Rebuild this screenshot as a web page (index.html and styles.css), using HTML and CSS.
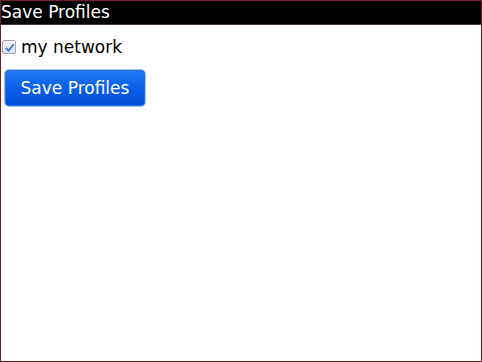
FILE: index.html
```html
<!DOCTYPE html>
<html lang="en">
  <head>
    <meta charset="UTF-8" />
    <title>Save Profiles</title>
    <link rel="stylesheet" href="styles.css">
  </head>
  <body>
    <div class="screen">
      <div class="title-bar">Save Profiles</div>
      <div class="content">
        <label class="check-row">
          <span class="check-box">
            <svg width="11" height="11" viewBox="0 0 12 12">
              <path d="M2 6.5 L5 9.5 L10.5 2.5" fill="none" stroke="#2f6fd0" stroke-width="1.8" />
            </svg>
          </span>
          my network
        </label>
        <button class="save-button">Save Profiles</button>
      </div>
    </div>
  </body>
</html>
```

FILE: styles.css
```css
body {
  margin: 0;
  padding: 0;
  font-family: "DejaVu Sans", sans-serif;
}

.screen {
  width: 482px;
  height: 362px;
  box-sizing: border-box;
  border: 1px solid #6e1f2c;
  background: #fff;
}

.title-bar {
  height: 23px;
  background: #000;
  color: #fff;
  font-size: 17px;
  line-height: 22px;
  padding-left: 0;
  border-bottom: 1px solid #4a3a3e;
}

.content {
  padding: 12px 3px 12px 1px;
}

.check-row {
  display: flex;
  align-items: center;
  gap: 5px;
  font-size: 17px;
  height: 20px;
}

.check-box {
  width: 12px;
  height: 12px;
  border: 1px solid #9aa4b4;
  border-radius: 2px;
  background: linear-gradient(#f4f6fa, #d8dee8);
  display: flex;
  align-items: center;
  justify-content: center;
}

.save-button {
  margin: 12px 0 0 2px;
  width: 142px;
  height: 38px;
  border: 1px solid #9cc0f2;
  border-radius: 5px;
  background: linear-gradient(#1f7cf4, #0b5ee6 50%, #0450d8);
  box-shadow: inset 0 0 0 1px #2b6fe0;
  color: #fff;
  font-family: "DejaVu Sans", sans-serif;
  font-size: 17px;
  padding: 0;
}
```
